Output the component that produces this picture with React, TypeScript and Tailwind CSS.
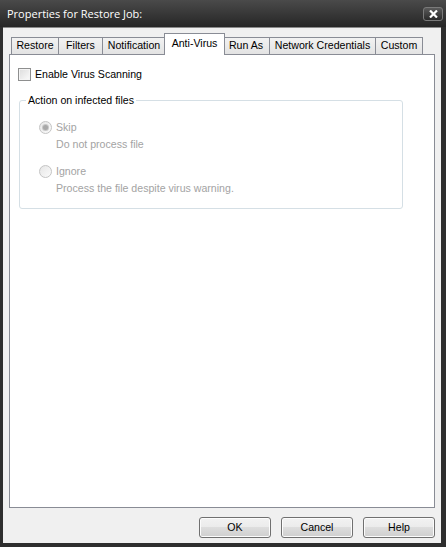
import React from "react";

const tabs = [
  { label: "Restore", w: 48 },
  { label: "Filters", w: 45 },
  { label: "Notification", w: 64 },
  { label: "Anti-Virus", w: 61, active: true },
  { label: "Run As", w: 48 },
  { label: "Network Credentials", w: 107 },
  { label: "Custom", w: 48 },
];

function Radio({ checked }: { checked?: boolean }) {
  return (
    <span className="flex h-[13px] w-[13px] items-center justify-center rounded-full border border-[#c4c4c4] bg-gradient-to-br from-[#e6e6e6] to-[#fbfbfb]">
      {checked && <span className="h-[5px] w-[5px] rounded-full bg-[#a8a8a8] ring-1 ring-[#c8c8c8]" />}
    </span>
  );
}

function DialogButton({ label }: { label: string }) {
  return (
    <button className="h-[21px] w-[72px] rounded-[3px] border border-[#707070] bg-[linear-gradient(#f2f2f2_0%,#ebebeb_50%,#dddddd_50%,#cfcfcf_100%)] text-[10.6px] leading-[13px] text-black shadow-[inset_0_0_0_1px_#fcfcfc]">
      {label}
    </button>
  );
}

export default function App() {
  return (
    <div
      className="flex h-[547px] w-[446px] flex-col bg-[#2e2e2e] text-[10.6px] leading-[13px] text-black"
      style={{ fontFamily: '"Liberation Sans", Arial, sans-serif' }}
    >
      {/* title bar */}
      <div className="flex h-[27px] items-center justify-between bg-[linear-gradient(#4a4a4a,#262626)] pl-[7px] pr-[3px]">
        <span className="text-[11px] leading-[15px] text-white" style={{ fontFamily: '"Open Sans", sans-serif' }}>
          Properties for Restore Job:
        </span>
        <div className="flex h-[14px] w-[20px] items-center justify-center rounded-[3px] border border-[#7a7a7a] bg-[linear-gradient(#5a5a5a,#2a2a2a)]">
          <svg width="9" height="8" viewBox="0 0 9 8">
            <path d="M1 0.5 L8 7.5 M8 0.5 L1 7.5" stroke="#ffffff" strokeWidth="2.2" />
          </svg>
        </div>
      </div>

      {/* client area */}
      <div className="mb-[4px] ml-[3px] mr-[5px] flex flex-1 flex-col border-t border-[#8a8a8a] bg-[#f0f0f0] px-[6px] pt-[5px]">
        <div className="flex h-[21px] items-end pl-[2px]">
          {tabs.map((t) =>
            t.active ? (
              <div
                key={t.label}
                style={{ width: t.w }}
                className="relative z-10 -mx-[2px] -mb-px flex h-[22px] items-start justify-center border border-b-0 border-[#898c95] bg-white pt-[3px]"
              >
                {t.label}
              </div>
            ) : (
              <div
                key={t.label}
                style={{ width: t.w }}
                className="-ml-px flex h-[17px] items-center justify-center border border-b-0 border-[#898c95] bg-[linear-gradient(#f2f2f2,#e3e3e3)] pb-px first:ml-0"
              >
                {t.label}
              </div>
            )
          )}
        </div>

        <div className="h-[454px] border border-[#898c95] bg-white px-[8px] pt-[13px]">
          <label className="flex items-center gap-[4px]">
            <span className="h-[13px] w-[13px] border border-[#8e8f8f] bg-gradient-to-br from-[#dcdcdc] to-[#fbfbfb] shadow-[inset_0_0_0_1px_#f4f4f4]" />
            <span>Enable Virus Scanning</span>
          </label>

          <fieldset className="ml-px mt-[13px] h-[115px] w-[384px] rounded-[3px] border border-[#d5dfe5]">
            <legend className="ml-[6px] px-[2px] leading-[13px]">Action on infected files</legend>
            <div className="pl-[19px] text-[#a3a3a3]">
              <div className="mt-[14px] flex items-center gap-[4px]">
                <Radio checked />
                <span>Skip</span>
              </div>
              <div className="ml-[17px] mt-[4px]">Do not process file</div>
              <div className="mt-[14px] flex items-center gap-[4px]">
                <Radio />
                <span>Ignore</span>
              </div>
              <div className="ml-[17px] mt-[4px]">Process the file despite virus warning.</div>
            </div>
          </fieldset>
        </div>

        <div className="mt-[9px] flex justify-end gap-[10px]">
          <DialogButton label="OK" />
          <DialogButton label="Cancel" />
          <DialogButton label="Help" />
        </div>
      </div>
    </div>
  );
}
